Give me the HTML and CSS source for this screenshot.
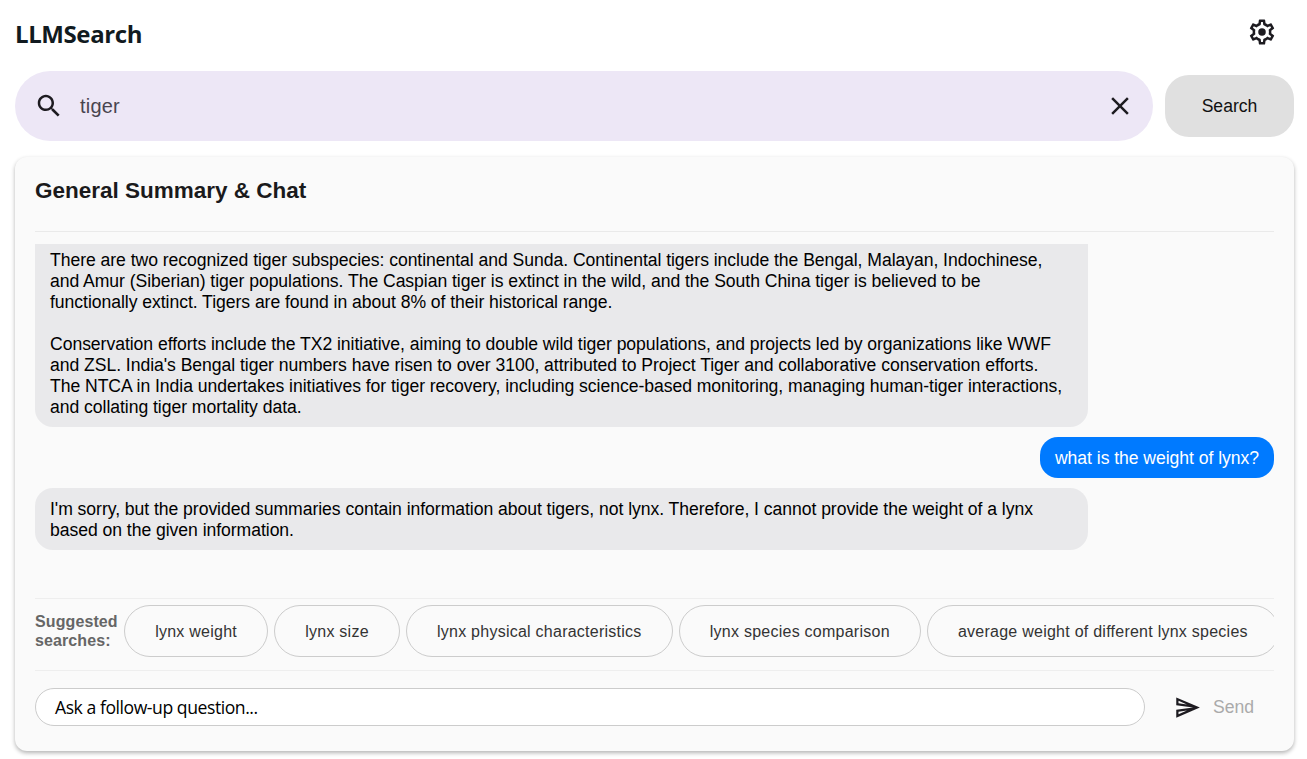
FILE: index.html
```html
<!DOCTYPE html>
<html lang="en">
<head>
<meta charset="utf-8">
<title>LLMSearch</title>
<link rel="stylesheet" href="styles.css">
</head>
<body>
<div class="app">
  <header class="topbar">
    <h1 class="brand">LLMSearch</h1>
    <button class="icon-btn" aria-label="Settings">
      <svg class="gear" viewBox="0 0 24 24"><path d="M19.43 12.98c.04-.32.07-.64.07-.98 0-.34-.03-.66-.07-.98l2.11-1.65c.19-.15.24-.42.12-.64l-2-3.46c-.09-.16-.26-.25-.44-.25-.06 0-.12.01-.17.03l-2.49 1c-.52-.4-1.08-.73-1.69-.98l-.38-2.65C14.46 2.18 14.25 2 14 2h-4c-.25 0-.46.18-.49.42l-.38 2.65c-.61.25-1.17.59-1.69.98l-2.49-1c-.06-.02-.12-.03-.18-.03-.17 0-.34.09-.43.25l-2 3.46c-.13.22-.07.49.12.64l2.11 1.65c-.04.32-.07.65-.07.98 0 .33.03.66.07.98l-2.11 1.65c-.19.15-.24.42-.12.64l2 3.46c.09.16.26.25.44.25.06 0 .12-.01.17-.03l2.49-1c.52.4 1.08.73 1.69.98l.38 2.65c.03.24.24.42.49.42h4c.25 0 .46-.18.49-.42l.38-2.65c.61-.25 1.17-.59 1.69-.98l2.49 1c.06.02.12.03.18.03.17 0 .34-.09.43-.25l2-3.46c.12-.22.07-.49-.12-.64l-2.11-1.65zm-1.98-1.71c.04.31.05.52.05.73 0 .21-.02.43-.05.73l-.14 1.13.89.7 1.08.84-.7 1.21-1.27-.51-1.04-.42-.9.68c-.43.32-.84.56-1.25.73l-1.06.43-.16 1.13-.2 1.35h-1.4l-.19-1.35-.16-1.13-1.06-.43c-.43-.18-.83-.41-1.23-.71l-.91-.7-1.06.43-1.27.51-.7-1.21 1.08-.84.89-.7-.14-1.13c-.03-.31-.05-.54-.05-.74s.02-.43.05-.73l.14-1.13-.89-.7-1.08-.84.7-1.21 1.27.51 1.04.42.9-.68c.43-.32.84-.56 1.25-.73l1.06-.43.16-1.13.2-1.35h1.39l.19 1.35.16 1.13 1.06.43c.43.18.83.41 1.23.71l.91.7 1.06-.43 1.27-.51.7 1.21-1.07.85-.89.7.14 1.13z"/><circle cx="12" cy="12" r="3"/></svg>
    </button>
  </header>
  <div class="search-row">
    <div class="search-box">
      <svg class="search-icon" viewBox="0 0 24 24"><path d="M15.5 14h-.79l-.28-.27C15.41 12.59 16 11.11 16 9.5 16 5.91 13.09 3 9.5 3S3 5.91 3 9.5 5.91 16 9.5 16c1.61 0 3.09-.59 4.23-1.57l.27.28v.79l5 4.99L20.49 19l-4.99-5zm-6 0C7.01 14 5 11.99 5 9.5S7.01 5 9.5 5 14 7.01 14 9.5 11.99 14 9.5 14z"/></svg>
      <span class="search-value">tiger</span>
      <svg class="clear-icon" viewBox="0 0 24 24"><path d="M19 6.41 17.59 5 12 10.59 6.41 5 5 6.41 10.59 12 5 17.59 6.41 19 12 13.41 17.59 19 19 17.59 13.41 12z"/></svg>
    </div>
    <button class="search-btn">Search</button>
  </div>
  <section class="card">
    <h2 class="card-title">General Summary &amp; Chat</h2>
    <div class="chat">
      <div class="msg msg-ai msg-clipped">There are two recognized tiger subspecies: continental and Sunda. Continental tigers include the Bengal, Malayan, Indochinese, and Amur (Siberian) tiger populations. The Caspian tiger is extinct in the wild, and the South China tiger is believed to be functionally extinct. Tigers are found in about 8% of their historical range.<br><br>Conservation efforts include the TX2 initiative, aiming to double wild tiger populations, and projects led by organizations like WWF and ZSL. India's Bengal tiger numbers have risen to over 3100, attributed to Project Tiger and collaborative conservation efforts. The NTCA in India undertakes initiatives for tiger recovery, including science-based monitoring, managing human-tiger interactions, and collating tiger mortality data.</div>
      <div class="msg msg-user">what is the weight of lynx?</div>
      <div class="msg msg-ai">I'm sorry, but the provided summaries contain information about tigers, not lynx. Therefore, I cannot provide the weight of a lynx based on the given information.</div>
    </div>
    <div class="suggestions">
      <div class="suggest-label">Suggested searches:</div>
      <button class="chip">lynx weight</button>
      <button class="chip">lynx size</button>
      <button class="chip">lynx physical characteristics</button>
      <button class="chip">lynx species comparison</button>
      <button class="chip">average weight of different lynx species</button>
    </div>
    <div class="composer">
      <div class="ask">Ask a follow-up question...</div>
      <button class="send">
        <svg class="send-icon" viewBox="0 0 24 24"><path d="M4.01 6.03l7.51 3.22-7.52-1 .01-2.22m7.5 8.72L4 17.97v-2.22l7.51-1M2.01 3L2 10l15 2-15 2 .01 7L23 12 2.01 3z"/></svg>
        <span>Send</span>
      </button>
    </div>
  </section>
</div>
</body>
</html>
```
FILE: styles.css
```css
* { box-sizing: border-box; }
html, body { margin: 0; height: 100%; background: #fff; overflow: hidden; }
body { font-family: "Liberation Sans", Arial, sans-serif; color: #1d1b20; }
.app { padding: 0 13px 8px 15px; height: 759px; display: flex; flex-direction: column; }
.topbar { height: 71px; display: flex; align-items: center; justify-content: space-between; padding-bottom: 7px; flex: none; }
.brand { margin: 3px 0 0; font-family: "Open Sans", sans-serif; font-size: 24px; font-weight: 700; color: #111a20; letter-spacing: -0.4px; line-height: 32px; }
.icon-btn { border: 0; background: none; padding: 0; width: 30px; height: 30px; margin-right: 17px; }
.gear { width: 30px; height: 30px; fill: #1d1b20; display: block; }
.search-row { display: flex; align-items: center; gap: 12px; flex: none; height: 70px; }
.search-box { flex: 1; height: 70px; border-radius: 35px; background: #ede7f6; display: flex; align-items: center; padding: 0 18px 0 19px; }
.search-icon { width: 30px; height: 30px; fill: #1d1b20; flex: none; }
.search-value { flex: 1; margin-left: 16px; font-size: 20px; letter-spacing: .2px; color: #49454f; }
.clear-icon { width: 30px; height: 30px; fill: #1d1b20; flex: none; }
.search-btn { width: 129px; height: 62px; border: 0; border-radius: 24px; background: #e0e0e0; font: 17.6px "Liberation Sans", sans-serif; color: #111; }
.card { margin-top: 16px; flex: 1; min-height: 0; background: #fafafa; border-radius: 12px; box-shadow: 0 2px 4px rgba(0,0,0,.3); padding: 21px 20px 0; display: flex; flex-direction: column; }
.card-title { margin: 0; font-size: 22.5px; font-weight: 700; color: #1a1a1c; line-height: 26px; border-bottom: 1px solid #eaeaea; flex: none; box-sizing: content-box; height: 33px; padding-bottom: 20px; }
.chat { flex: 1; min-height: 0; overflow: hidden; display: flex; flex-direction: column; gap: 10px; margin-top: 12px; }
.msg { font-size: 17.6px; line-height: 21px; letter-spacing: -0.05px; padding: 11px 15px 9px; border-radius: 18px; flex: none; }
.msg-ai { width: 85%; background: #e9e9eb; color: #000; align-self: flex-start; padding-right: 18px; }
.msg-clipped { padding-top: 6px; border-radius: 0 0 18px 18px; }
.msg-user { background: #007aff; color: #fff; align-self: flex-end; }
.suggestions { flex: none; height: 73px; border-top: 1px solid #eee; border-bottom: 1px solid #eee; display: flex; align-items: center; gap: 6.15px; overflow: hidden; padding-bottom: 8px; }
.suggest-label { flex: none; width: 83px; margin-top: 1px; font-size: 16px; font-weight: 700; line-height: 19px; color: #666; letter-spacing: .1px; }
.chip { flex: none; height: 52px; padding: 2px 30px 0; border: 1px solid #ccc; border-radius: 26px; background: #fafafa; font: 16px "Liberation Sans", sans-serif; letter-spacing: .25px; color: #333; white-space: nowrap; }
.composer { flex: none; height: 80px; display: flex; align-items: flex-start; padding-top: 17px; gap: 29px; }
.ask { flex: 1; height: 38px; border: 1px solid #ccc; border-radius: 19px; background: #fff; padding: 0 19px; font: 17.6px/37px "Open Sans", sans-serif; letter-spacing: -0.45px; color: #000; }
.send { flex: none; width: 100px; height: 38px; border: 0; background: none; padding: 0; display: flex; align-items: center; gap: 12px; font: 17.6px "Liberation Sans", sans-serif; color: #aaa; }
.send-icon { width: 27px; height: 27px; fill: #1d1b20; flex: none; }
```
